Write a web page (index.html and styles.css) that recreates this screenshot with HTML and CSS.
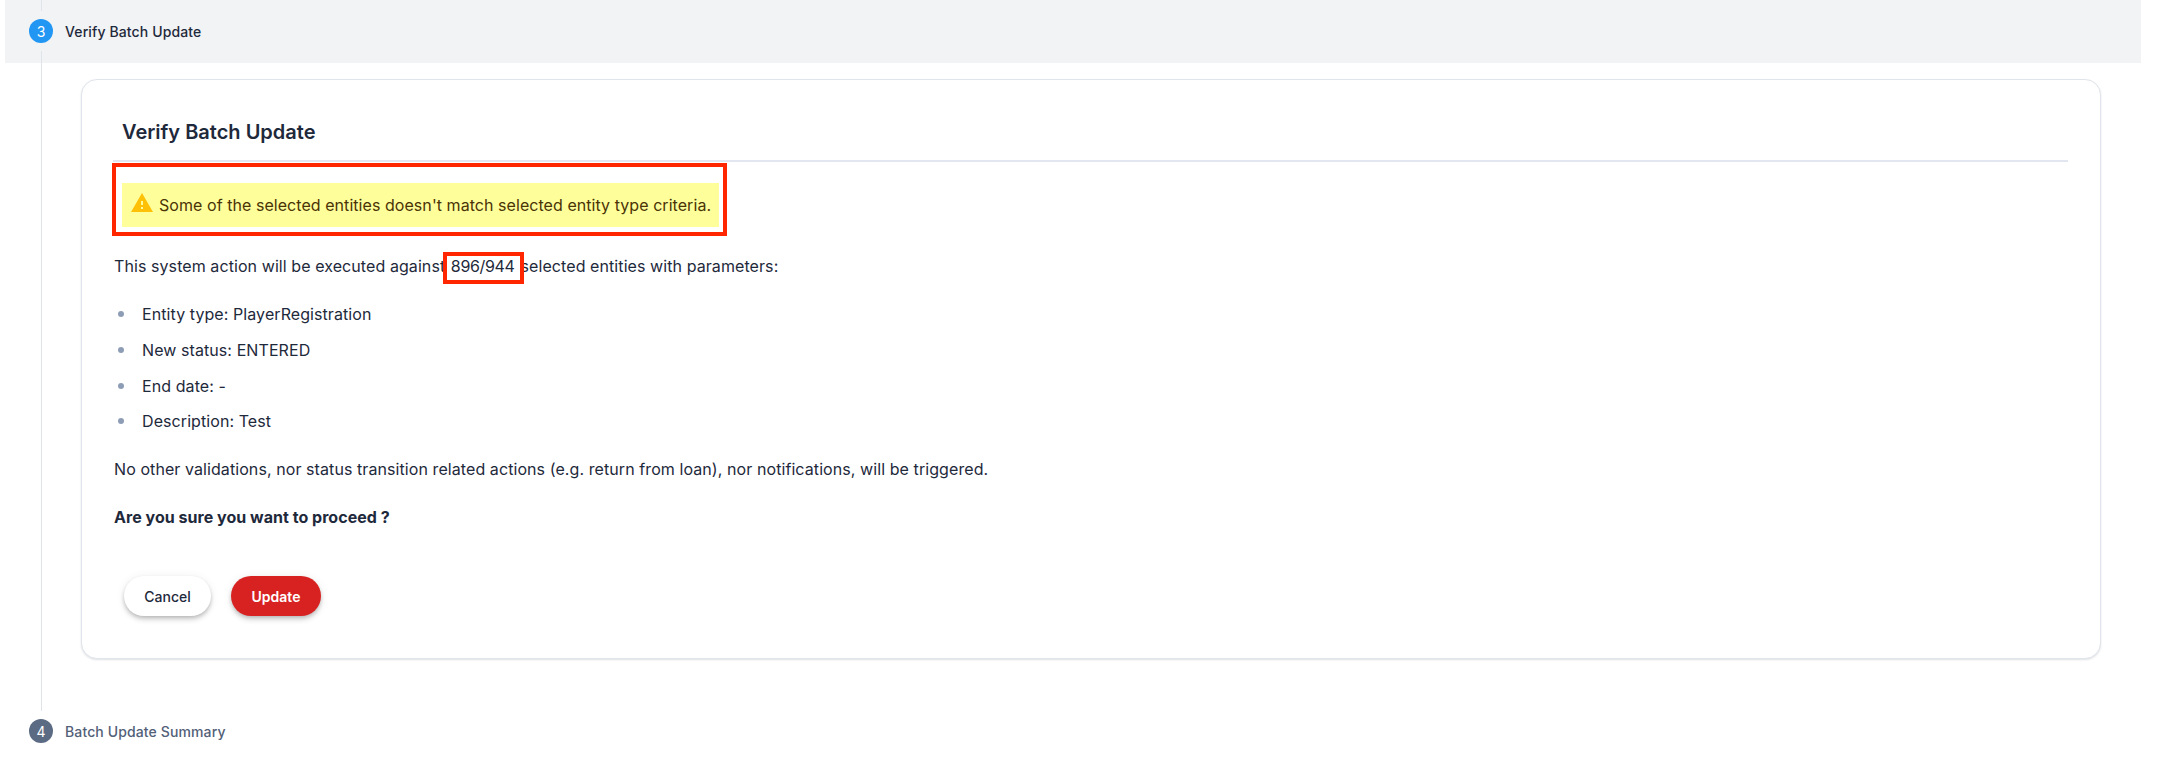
FILE: index.html
```html
<!DOCTYPE html>
<html lang="en">
<head>
<meta charset="utf-8">
<title>Verify Batch Update</title>
<link rel="stylesheet" href="styles.css">
</head>
<body>
<main class="stepper">
  <header class="step-head step-head--active">
    <span class="step-num step-num--active">3</span>
    <span class="step-label step-label--active">Verify Batch Update</span>
  </header>
  <section class="step-body">
    <div class="card">
      <h2 class="card-title">Verify Batch Update</h2>
      <div class="alert">
        <svg class="alert-icon" viewBox="0 0 24 24" aria-hidden="true"><path d="M1 21h22L12 2 1 21zm12-3h-2v-2h2v2zm0-4h-2v-4h2v4z"/></svg>
        <span>Some of the selected entities doesn't match selected entity type criteria.</span>
      </div>
      <p class="text text--first">This system action will be executed against <span class="count">896/944</span> selected entities with parameters:</p>
      <ul class="params">
        <li>Entity type: PlayerRegistration</li>
        <li>New status: ENTERED</li>
        <li>End date: -</li>
        <li>Description: Test</li>
      </ul>
      <p class="text text--after-list">No other validations, nor status transition related actions (e.g. return from loan), nor notifications, will be triggered.</p>
      <p class="text text--strong">Are you sure you want to proceed ?</p>
      <div class="actions">
        <button class="btn btn--cancel" type="button">Cancel</button>
        <button class="btn btn--update" type="button">Update</button>
      </div>
    </div>
  </section>
  <div class="step-head">
    <span class="step-num">4</span>
    <span class="step-label">Batch Update Summary</span>
  </div>
</main>
</body>
</html>
```
FILE: styles.css
```css
* { box-sizing: border-box; }
html, body { margin: 0; padding: 0; background: #fff; }
body {
  font-family: Inter, "Noto Sans", "Liberation Sans", sans-serif;
  color: #1e293b;
  overflow: hidden;
}
.stepper { padding: 0 16px 0 5px; }
.step-head {
  position: relative;
  display: flex;
  align-items: center;
  gap: 12px;
  height: 40px;
  padding-left: 24px;
}
.step-head--active { height: 63px; background: #f1f3f5; }
.step-head--active::before,
.step-head--active::after {
  content: "";
  position: absolute;
  left: 36px;
  width: 1px;
  background: #dfe3ea;
}
.step-head--active::before { top: 0; height: 11px; }
.step-head--active::after { top: 51px; bottom: 0; }
.step-num {
  display: flex;
  align-items: center;
  justify-content: center;
  width: 24px;
  height: 24px;
  border-radius: 50%;
  background: #5b6b83;
  color: #fff;
  font-size: 14px;
  font-weight: 400;
}
.step-num--active { background: #2196f3; margin-top: -1px; }
.step-label { font-size: 14px; font-weight: 500; color: #526078; letter-spacing: .12px; }
.step-label--active { color: #1e293b; margin-top: -1px; }
.step-body {
  margin: 0 40px 0 36px;
  padding: 16px 0 52px 39px;
  border-left: 1px solid #dfe3ea;
}
.card {
  height: 580px;
  padding: 36px 32px 0 31px;
  border: 1px solid #e0e4ec;
  border-radius: 16px;
  background: #fff;
  box-shadow: 0 1px 2px rgba(30, 41, 59, .14);
}
.card-title {
  margin: 0;
  height: 46px;
  padding: 0 0 12px 9px;
  border-bottom: 2px solid #e2e6f0;
  font-size: 20px;
  font-weight: 600;
  line-height: 32px;
  color: #1e293b;
}
.alert {
  position: relative;
  display: flex;
  align-items: center;
  gap: 5px;
  width: fit-content;
  height: 44px;
  margin: 21px 0 0 9px;
  padding: 0 8px;
  background: #feff9a;
  color: #4a3306;
  font-size: 16px;
  letter-spacing: .055px;
}
.alert::after {
  content: "";
  position: absolute;
  inset: -20px -8px -9px -10px;
  border: 4px solid #ff2600;
}
.alert-icon { width: 24px; height: 24px; fill: #ffc107; margin-top: -4px; }
.text {
  margin: 24px 0 0 1px;
  font-size: 16px;
  line-height: 24px;
  color: #1e293b;
  letter-spacing: .08px;
}
.text--first { margin-top: 27px; }
.text--after-list { margin-top: 23.5px; }
.text--strong { font-weight: 700; letter-spacing: .03px; }
.count { position: relative; margin: 0 1.5px 0 1px; letter-spacing: -.35px; }
.count::after {
  content: "";
  position: absolute;
  left: -8px;
  right: -10px;
  top: -4px;
  bottom: -8px;
  border: 4px solid #ff2600;
}
.params { list-style: none; margin: 24px 0 0 1px; padding: 0; font-size: 16px; line-height: 24px; letter-spacing: .08px; }
.params li { display: flex; align-items: center; gap: 18px; margin-top: 11.75px; }
.params li:first-child { margin-top: 0; }
.params li::before {
  content: "";
  width: 6px;
  height: 6px;
  margin-left: 4px;
  border-radius: 50%;
  background: #8e9db6;
}
.actions { display: flex; gap: 20px; margin: 47.25px 0 0 11px; }
.btn {
  height: 40px;
  border: 0;
  border-radius: 20px;
  font: 500 14px Inter, "Noto Sans", sans-serif;
  box-shadow: 0 2px 4px -1px rgba(0,0,0,.2), 0 4px 5px 0 rgba(0,0,0,.1), 0 1px 10px 0 rgba(0,0,0,.08);
}
.btn--cancel { width: 87px; background: #fff; color: #1e293b; }
.btn--update { width: 90px; background: #d82222; color: #fff; font-weight: 600; }
```
